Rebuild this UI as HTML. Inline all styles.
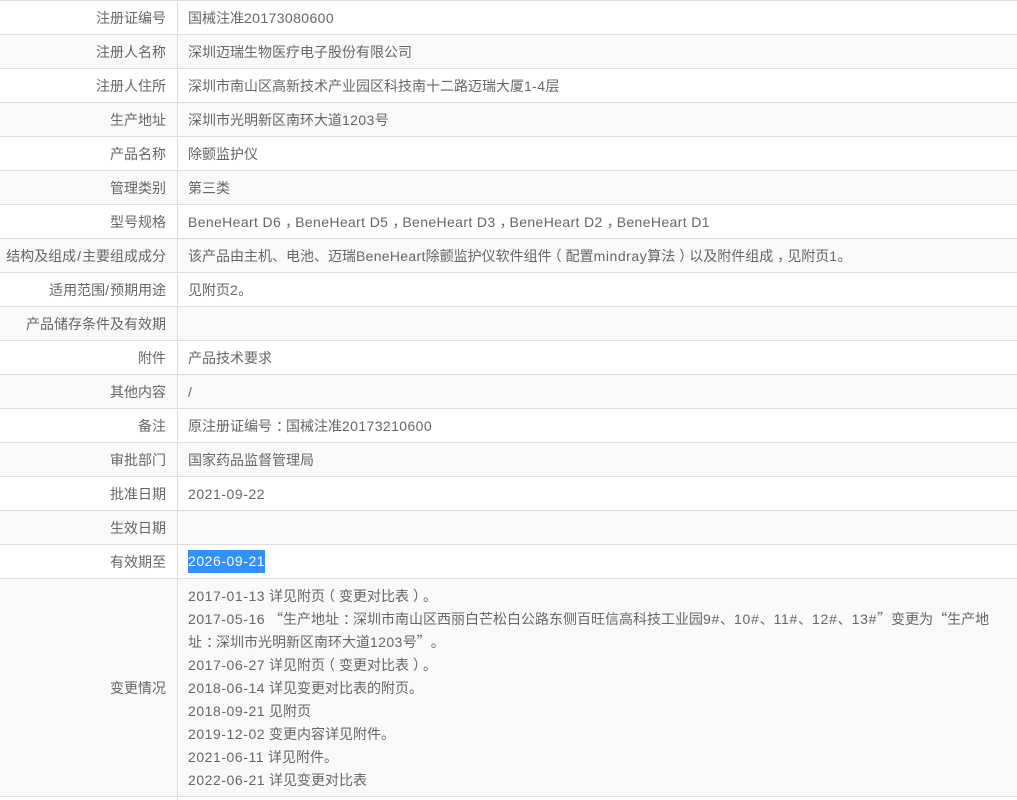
<!DOCTYPE html>
<html lang="zh">
<head>
<meta charset="utf-8">
<style>
html,body{margin:0;padding:0;width:1017px;height:800px;overflow:hidden;background:#fff}
body{position:relative;font-family:"Liberation Sans","Noto Sans CJK SC",sans-serif;font-size:14px;color:#666;text-spacing-trim:space-all}
.r{position:absolute;left:0;width:1017px;height:33px;border-top:1px solid #ddd;background:#fff}
.r.g{background:#f9f9f9}
.l{position:absolute;left:0;top:1px;width:166px;text-align:right;line-height:33px;white-space:nowrap}
.c{position:absolute;left:177px;top:0;bottom:0;width:1px;background:#ddd}
.v{position:absolute;left:188px;top:1px;line-height:33px;white-space:nowrap}
i{font-style:normal;letter-spacing:.4px}
i.d{letter-spacing:.55px}
i.b{letter-spacing:.3px}
i.k{letter-spacing:.37px}
i.h{letter-spacing:.72px}
u{text-decoration:none;position:relative}
u.a{left:4px}
u.o{left:-4px}
q{quotes:none;display:inline-block;width:14px;font-family:"Noto Sans CJK SC",sans-serif;line-height:1}
q.s{text-align:right}
q.e{text-align:left}
.sel{position:absolute;left:188px;top:5px;width:77px;height:23px;background:#3390ff;color:#fff;line-height:23px;white-space:nowrap}
.v.m{line-height:23px;top:6px}
</style>
</head>
<body>
<div class="r" style="top:0"><div class="l">注册证编号</div><div class="c"></div><div class="v">国械注准<i>20173080600</i></div></div>
<div class="r g" style="top:34px"><div class="l">注册人名称</div><div class="c"></div><div class="v">深圳迈瑞生物医疗电子股份有限公司</div></div>
<div class="r" style="top:68px"><div class="l">注册人住所</div><div class="c"></div><div class="v">深圳市南山区高新技术产业园区科技南十二路迈瑞大厦<i>1-4</i>层</div></div>
<div class="r g" style="top:102px"><div class="l">生产地址</div><div class="c"></div><div class="v">深圳市光明新区南环大道<i>1203</i>号</div></div>
<div class="r" style="top:136px"><div class="l">产品名称</div><div class="c"></div><div class="v">除颤监护仪</div></div>
<div class="r g" style="top:170px"><div class="l">管理类别</div><div class="c"></div><div class="v">第三类</div></div>
<div class="r" style="top:204px"><div class="l">型号规格</div><div class="c"></div><div class="v"><i class="k">BeneHeart D6</i><u class="a">，</u><i class="k">BeneHeart D5</i><u class="a">，</u><i class="k">BeneHeart D3</i><u class="a">，</u><i class="k">BeneHeart D2</i><u class="a">，</u><i class="k">BeneHeart D1</i></div></div>
<div class="r g" style="top:238px"><div class="l">结构及组成<span style="margin-left:1px;letter-spacing:1px">/</span>主要组成成分</div><div class="c"></div><div class="v">该产品由主机、电池、迈瑞<i class="b">BeneHeart</i>除颤监护仪软件组件<u class="o">（</u>配置<i class="d">mindray</i>算法<u class="a">）</u>以及附件组成<u class="a">，</u>见附页<i>1</i>。</div></div>
<div class="r" style="top:272px"><div class="l">适用范围<span style="letter-spacing:1px">/</span>预期用途</div><div class="c"></div><div class="v">见附页<i>2</i>。</div></div>
<div class="r g" style="top:306px"><div class="l">产品储存条件及有效期</div><div class="c"></div></div>
<div class="r" style="top:340px"><div class="l">附件</div><div class="c"></div><div class="v">产品技术要求</div></div>
<div class="r g" style="top:374px"><div class="l">其他内容</div><div class="c"></div><div class="v">/</div></div>
<div class="r" style="top:408px"><div class="l">备注</div><div class="c"></div><div class="v">原注册证编号<u class="a">：</u>国械注准<i>20173210600</i></div></div>
<div class="r g" style="top:442px"><div class="l">审批部门</div><div class="c"></div><div class="v">国家药品监督管理局</div></div>
<div class="r" style="top:476px"><div class="l">批准日期</div><div class="c"></div><div class="v"><i class="d">2021-09-22</i></div></div>
<div class="r g" style="top:510px"><div class="l">生效日期</div><div class="c"></div></div>
<div class="r" style="top:544px"><div class="l">有效期至</div><div class="c"></div><div class="sel"><i class="d">2026-09-21</i></div></div>
<div class="r g" style="top:578px;height:218px"><div class="l" style="top:0;line-height:218px">变更情况</div><div class="c"></div><div class="v m"><i class="d">2017-01-13</i> 详见附页<u class="o">（</u>变更对比表<u class="a">）</u>。<br><i class="d">2017-05-16</i> <q class="s">“</q>生产地址<u class="a">：</u>深圳市南山区西丽白芒松白公路东侧百旺信高科技工业园<i class="h">9#</i>、<i class="h">10#</i>、<i class="h">11#</i>、<i class="h">12#</i>、<i class="h">13#</i><q class="e">”</q>变更为<q class="s">“</q>生产地<br>址<u class="a">：</u>深圳市光明新区南环大道<i>1203</i>号<q class="e">”</q>。<br><i class="d">2017-06-27</i> 详见附页<u class="o">（</u>变更对比表<u class="a">）</u>。<br><i class="d">2018-06-14</i> 详见变更对比表的附页。<br><i class="d">2018-09-21</i> 见附页<br><i class="d">2019-12-02</i> 变更内容详见附件。<br><i class="d">2021-06-11</i> 详见附件。<br><i class="d">2022-06-21</i> 详见变更对比表</div></div>
<div class="r" style="top:796px"><div class="c"></div></div>
</body>
</html>
